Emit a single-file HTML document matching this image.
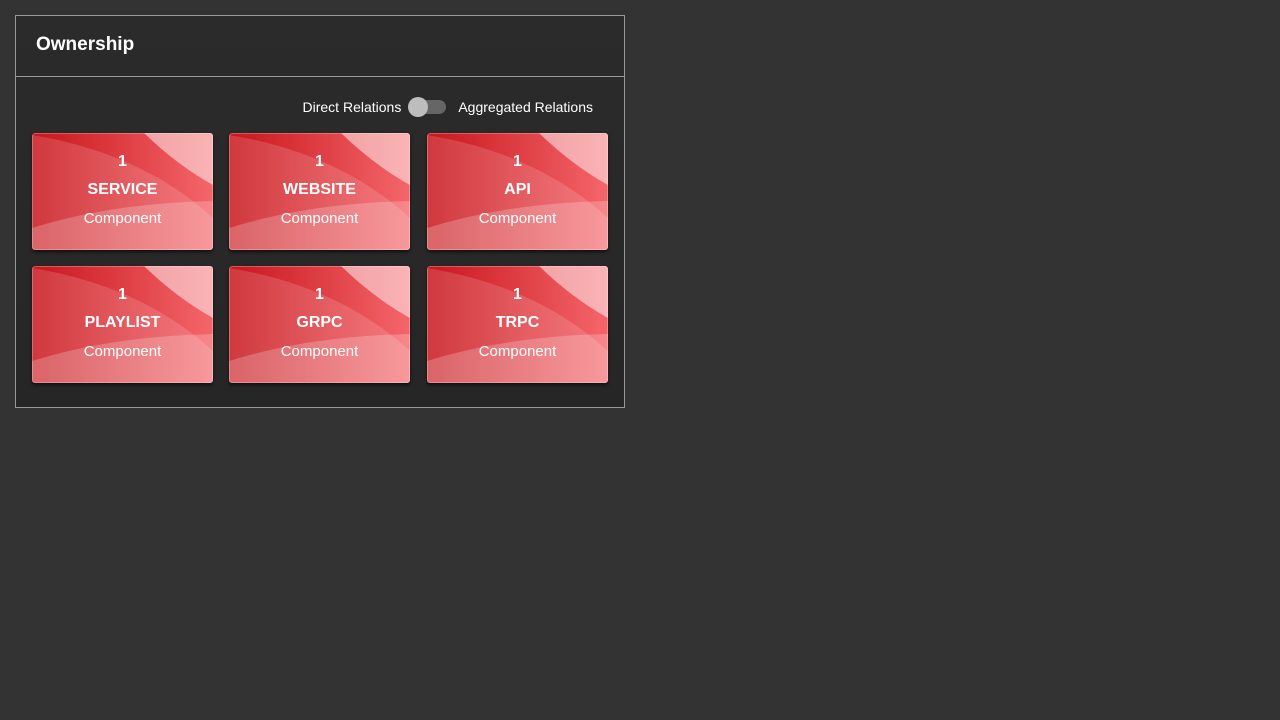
<!DOCTYPE html>
<html><head><style>
body{margin:0;background:#333;font-family:"Liberation Sans",sans-serif;color:#fff;}
.panel{position:absolute;left:15px;top:15px;width:608px;height:391px;border:1px solid #999;background:linear-gradient(#2b2b2b,#262626);}
.hdr{height:60px;border-bottom:1px solid #999;}
.hdr h2{margin:0;position:absolute;left:20px;top:18px;font-size:19px;font-weight:bold;}
.tog{position:absolute;top:83px;right:31px;font-size:14px;display:flex;align-items:center;}
.sw{width:36px;height:14px;background:#666;border-radius:7px;margin:0 12px 0 9px;position:relative;}
.sw:after{content:"";position:absolute;left:-2px;top:-3px;width:20px;height:20px;border-radius:50%;background:#bdbdbd;}
.card{position:absolute;width:181px;height:117px;border-radius:3px;overflow:hidden;box-shadow:0 2px 3px rgba(0,0,0,.6);}
.card svg{position:absolute;left:0;top:0}
.t{position:absolute;width:100%;text-align:center;}
</style></head><body>
<div class="panel">
<div class="hdr"><h2>Ownership</h2></div>
<div class="tog">Direct Relations<div class="sw"></div>Aggregated Relations</div>
</div>
<svg width="0" height="0" style="position:absolute"><defs><linearGradient id="g" x1="0" x2="1"><stop offset="0" stop-color="#c8161c"/><stop offset="1" stop-color="#f4666b"/></linearGradient></defs></svg>
<div id="cards"></div>
<script>
var d=[["SERVICE",32,133],["WEBSITE",229,133],["API",427,133],["PLAYLIST",32,266],["GRPC",229,266],["TRPC",427,266]];
var h="";
d.forEach(function(c){h+='<div class="card" style="left:'+c[1]+'px;top:'+c[2]+'px"><svg width="181" height="117"><rect width="181" height="117" fill="url(#g)"/><path d="M0,2 Q110,20 181,85 L181,117 L0,117Z" fill="#fff" opacity=".15"/><path d="M0,95 Q80,70 181,68 L181,117 L0,117Z" fill="#fff" opacity=".22"/><path d="M112,0 Q145,32 181,52 L181,0Z" fill="#fff" opacity=".5"/><rect x=".5" y=".5" width="180" height="116" rx="3" fill="none" stroke="#fff" stroke-opacity=".25"/></svg><div class="t" style="top:20px;font-size:16px;font-weight:bold">1</div><div class="t" style="top:48px;font-size:16px;font-weight:bold">'+c[0]+'</div><div class="t" style="top:77px;font-size:15px">Component</div></div>';});
document.getElementById("cards").innerHTML=h;
</script>
</body></html>
